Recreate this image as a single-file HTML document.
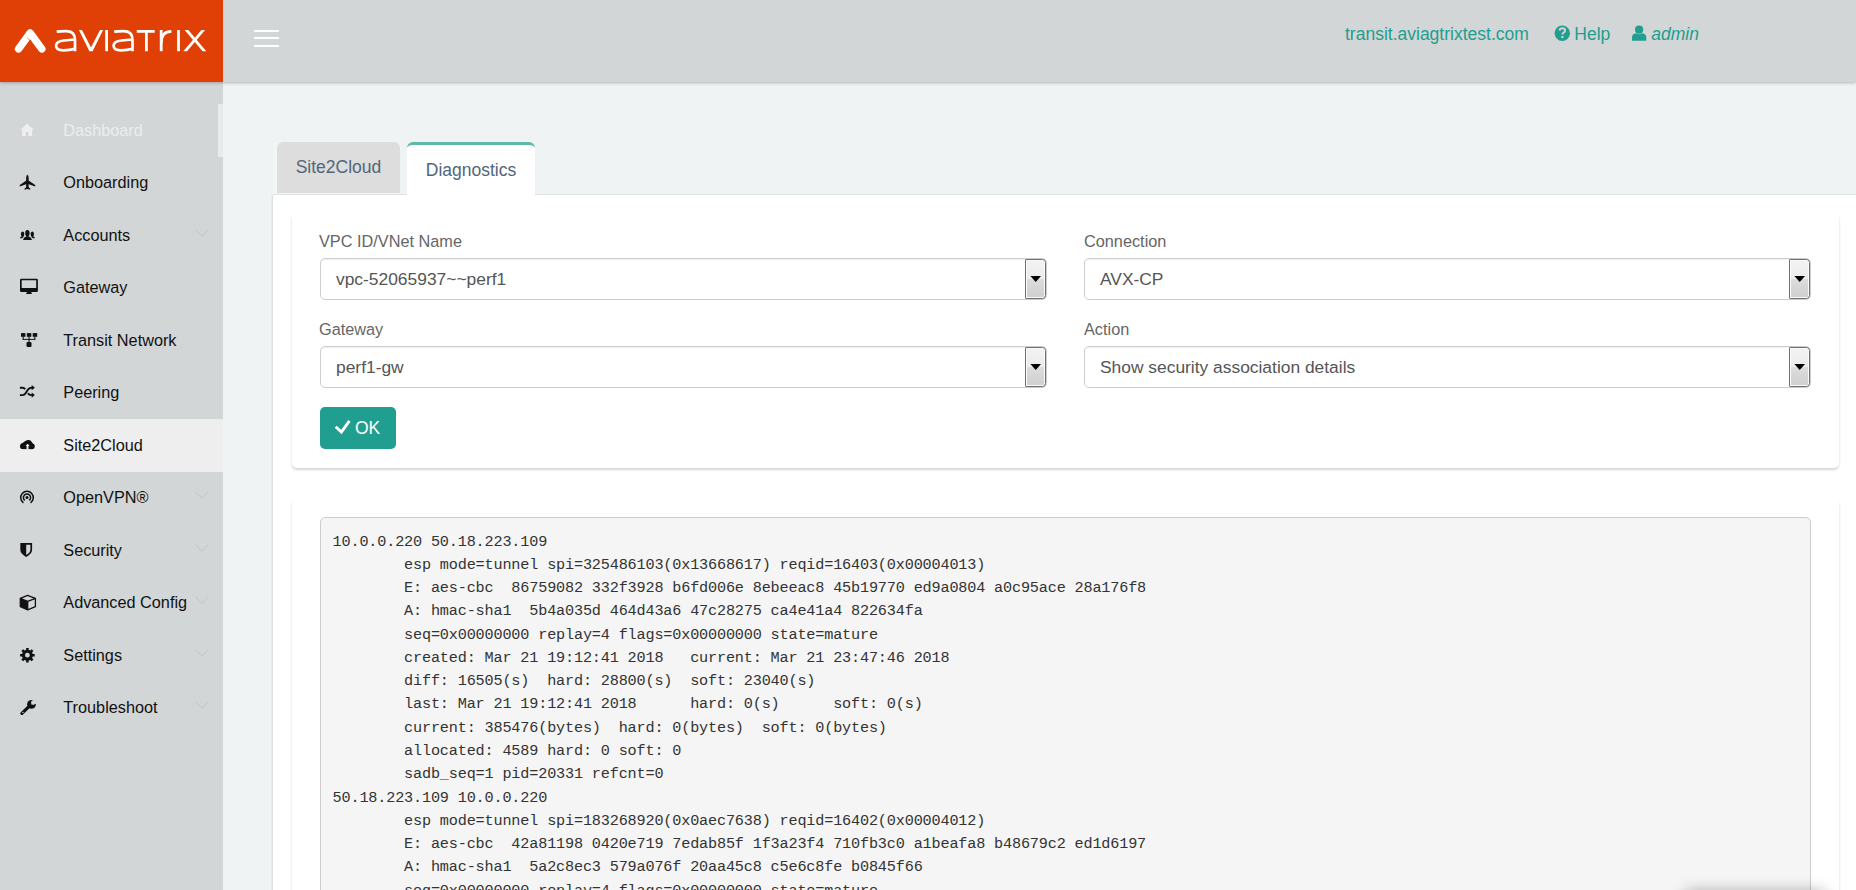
<!DOCTYPE html>
<html>
<head>
<meta charset="utf-8">
<title>Aviatrix Controller</title>
<style>
*{box-sizing:border-box;margin:0;padding:0}
html,body{width:1856px;height:890px;overflow:hidden}
body{font-family:"Liberation Sans",sans-serif;background:#eff3f4;position:relative;color:#333}
.abs{position:absolute}
#header{left:0;top:0;width:1856px;height:82px;background:#d3d6d7;box-shadow:0 1px 3px rgba(0,0,0,.25);z-index:5}
#logo{left:0;top:0;width:223px;height:82px;background:#e04006;z-index:6}
#sidebar{left:0;top:82px;width:223px;height:808px;background:#d3d6d7;z-index:2}
.nav{position:absolute;left:63.3px;height:20px;font-size:16.25px;color:#111;line-height:20px;white-space:nowrap}
.nav.dim{color:#eceeee}
.hdrtxt{top:0;height:68px;line-height:68px;font-size:17.5px;color:#209e8f;white-space:nowrap;z-index:7}
#panel{left:273px;top:194px;width:1583px;height:697px;background:#fff;border-top:1px solid #e0e3e4;box-shadow:-1px 1px 1.5px rgba(0,0,0,.10)}
.tab{position:absolute;font-size:17.5px;color:#51667a;text-align:center;white-space:nowrap}
#tab1{left:277px;top:142px;width:123px;height:51px;background:#ddd;border-radius:6px 6px 0 0;line-height:50px}
#tab2{left:407px;top:142px;width:128px;height:53px;background:#fff;border-radius:6px 6px 0 0;border-top:3px solid #5bb8ab;line-height:50px;z-index:3}
.card{position:absolute;left:292px;width:1547px;background:#fff;box-shadow:0 2px 2.5px rgba(0,0,0,.17);border-radius:5px}
label{position:absolute;font-size:16.3px;color:#666;white-space:nowrap;line-height:20px}
.sel{position:absolute;width:727px;height:42px;border:1px solid #ccc;border-radius:5px;background:#fff;font-size:17.4px;color:#555;line-height:40px;padding-left:15px;white-space:nowrap;box-shadow:inset 0 1px 1px rgba(0,0,0,.06)}
.sel i{position:absolute;right:0;top:0;width:21.4px;height:40px;border:1px solid #707070;border-radius:1px 3.5px 3.5px 1px;background:linear-gradient(#f3f3f3 0,#ebebeb 49%,#dddddd 50%,#cfcfcf 100%);box-shadow:inset 0 0 0 1px #fbfbfb}
.sel i:after{content:"";position:absolute;left:4.8px;top:16px;width:10.6px;height:5.9px;background:#000;clip-path:polygon(0 0,100% 0,50% 100%)}
#ok{left:320px;top:407px;width:76px;height:42px;background:#209e90;border-radius:5px;color:#fff;font-size:17.5px;line-height:43px;white-space:nowrap}
pre{position:absolute;left:320px;top:517px;width:1491px;height:400px;background:#f5f5f5;border:1px solid #ccc;border-radius:5px;font-family:"Liberation Mono",monospace;font-size:15.2px;letter-spacing:-0.175px;line-height:23.28px;color:#333;padding:12.5px 0 0 11.6px;tab-size:8;-moz-tab-size:8;overflow:hidden}
</style>
</head>
<body>
<div id="header" class="abs"></div>
<div id="logo" class="abs">
<svg width="223" height="82" viewBox="0 0 223 82">
<path d="M18.6 48.9 L30.15 33 L41.8 48.9" fill="none" stroke="#fff" stroke-width="7.5" stroke-linecap="round" stroke-linejoin="round"/>
<path d="M30.3 40.9 L27.4 38" stroke="#e04006" stroke-width="0.7" fill="none"/>
<path d="M56.7 31.6 Q60.0 31.1 66.0 31.1 Q75.0 31.1 75.0 39.6 L75.0 51.2 M75.0 39.5 L64.0 40.5 Q56.1 41.3 56.1 45.7 Q56.1 50.3 63.5 50.3 Q70.0 50.3 75.0 48.8" fill="none" stroke="#fff" stroke-width="2.7"/>
<path d="M78.9 30h3.1l9 17.6 9-17.6h3.1l-10.5 21.2h-3.2z" fill="#fff"/>
<rect x="105.2" y="30" width="2.8" height="21.2" fill="#fff"/>
<path d="M114.2 31.6 Q117.5 31.1 123.5 31.1 Q132.5 31.1 132.5 39.6 L132.5 51.2 M132.5 39.5 L121.5 40.5 Q113.6 41.3 113.6 45.7 Q113.6 50.3 121.0 50.3 Q127.5 50.3 132.5 48.8" fill="none" stroke="#fff" stroke-width="2.7"/>
<path d="M136.8 30h17.9v2.7h-6.9v18.5h-2.8V32.7h-8.2z" fill="#fff"/>
<rect x="159.8" y="30" width="2.8" height="21.2" fill="#fff"/>
<path d="M161.3 43 Q161.3 31.4 171.4 31.4" fill="none" stroke="#fff" stroke-width="2.7"/>
<rect x="177.1" y="30" width="2.8" height="21.2" fill="#fff"/>
<path d="M183.3 51.2h3.7L205.1 30h-3.7z" fill="#fff"/><path d="M184.6 30h3.7l18 21.2h-3.7z" fill="#fff"/>
</svg>
</div>
<svg class="abs" style="left:254px;top:29px;z-index:7" width="26" height="20" viewBox="0 0 26 20"><path d="M0 2h25M0 9h25M0 17h25" stroke="#fff" stroke-width="2"/></svg>
<svg class="abs" style="left:1550px;top:20px;z-index:7" width="104" height="28" viewBox="1550 20 104 28">
<circle cx="1562.3" cy="33.3" r="7.7" fill="#209e8f"/>
<path d="M1559.6 30.6 Q1559.8 28.3 1562.4 28.3 Q1565.1 28.3 1565.1 30.5 Q1565.1 31.8 1563.6 32.6 Q1562.4 33.3 1562.4 34.6" fill="none" stroke="#d3d6d7" stroke-width="1.9"/>
<rect x="1561.4" y="36" width="2" height="2.1" fill="#d3d6d7"/>
<circle cx="1639.1" cy="29.7" r="4.1" fill="#209e8f"/>
<path d="M1632 40.8 V37.5 Q1632 33.6 1636.2 33.3 Q1639.1 35 1642 33.3 Q1646.3 33.6 1646.3 37.5 V40.8Z" fill="#209e8f"/>
</svg>
<div class="hdrtxt abs" style="left:1345px">transit.aviagtrixtest.com</div>
<div class="hdrtxt abs" style="left:1574.3px">Help</div>
<div class="hdrtxt abs" style="left:1651.3px;font-style:italic">admin</div>

<div id="sidebar" class="abs">
<div class="abs" style="left:0;top:337px;width:223px;height:53px;background:#eee"></div>
<div class="nav dim" style="top:38px">Dashboard</div>
<div class="nav" style="top:90px">Onboarding</div>
<div class="nav" style="top:143px">Accounts</div>
<div class="nav" style="top:195px">Gateway</div>
<div class="nav" style="top:248px">Transit Network</div>
<div class="nav" style="top:300px">Peering</div>
<div class="nav" style="top:353px">Site2Cloud</div>
<div class="nav" style="top:405px">OpenVPN®</div>
<div class="nav" style="top:458px">Security</div>
<div class="nav" style="top:510px">Advanced Config</div>
<div class="nav" style="top:563px">Settings</div>
<div class="nav" style="top:615px">Troubleshoot</div>
</div>
<div class="abs" style="left:218px;top:104px;width:5px;height:53px;background:#eaecec;z-index:3"></div>

<svg class="abs" style="left:0;top:0;z-index:4" width="223" height="890" viewBox="0 0 223 890">
<!-- home -->
<path d="M27.1 123.8 L34 130 H32.1 V136 H28.4 V132 H25.8 V136 H22.1 V130 H20.2 Z" fill="#efefef"/>
<!-- plane -->
<g fill="#111">
<path d="M27.4 174.5 Q28.65 175.5 28.65 178 L28.65 187.6 L27.4 188.8 L26.15 187.6 L26.15 178 Q26.15 175.5 27.4 174.5Z"/>
<path d="M27.4 179.8 L35.2 185.1 L35.2 186.5 L27.4 183.8 L19.8 186.5 L19.8 185.1 Z"/>
<path d="M27.4 186.6 L30.2 188.6 L30.2 189.8 L27.4 189.0 L24.6 189.8 L24.6 188.6Z"/>
</g>
<!-- group -->
<g fill="#111">
<ellipse cx="27.4" cy="233.2" rx="2.2" ry="3.1"/><rect x="26.3" y="235.3" width="2.2" height="2.2"/>
<path d="M23 239.9 Q23.4 237.3 26.2 236.6 L27.4 237.3 L28.6 236.6 Q31.6 237.3 32 239.9Z"/>
<ellipse cx="22.6" cy="234.1" rx="1.7" ry="2.5"/><rect x="21.8" y="235.6" width="1.6" height="1.4"/>
<ellipse cx="32.3" cy="234.1" rx="1.7" ry="2.5"/><rect x="31.5" y="235.6" width="1.6" height="1.4"/>
<path d="M19.9 238.2 Q20.2 236.6 22 236.2 L23.6 237 Q22.5 237.5 22.3 238.2Z"/>
<path d="M35 238.2 Q34.7 236.6 32.9 236.2 L31.3 237 Q32.4 237.5 32.6 238.2Z"/>
</g>
<!-- monitor -->
<path d="M21.2 278.8 H36.7 Q37.9 278.8 37.9 280 V290.7 Q37.9 291.9 36.7 291.9 H21.2 Q20 291.9 20 290.7 V280 Q20 278.8 21.2 278.8Z M21.7 280.2 V288 H36.2 V280.2Z" fill="#111" fill-rule="evenodd"/>
<path d="M25.8 293.9 L27.4 291.8 L30.9 291.8 L32.1 293.9Z" fill="#111"/>
<!-- sitemap -->
<g fill="#111">
<rect x="21" y="333.1" width="4.4" height="3.7"/><rect x="26.8" y="333.1" width="4.5" height="3.7"/><rect x="32.7" y="333.1" width="4.5" height="3.7"/>
<rect x="22.7" y="336.5" width="1" height="3.3"/><rect x="34.3" y="336.5" width="1" height="3.3"/><rect x="28.5" y="336.5" width="1.1" height="6"/>
<rect x="22.7" y="338.9" width="12.6" height="0.95"/>
<rect x="26.5" y="342" width="5" height="4.9" rx="1"/>
</g>
<!-- shuffle -->
<g fill="none" stroke="#111" stroke-width="1.9">
<path d="M19.9 395.1 H22.3 Q24.5 395.1 25.8 393 L27.8 389.8 Q29.2 387.7 31.2 387.7 H32.2"/>
<path d="M19.9 387.7 H22.3 Q24.2 387.7 25.2 389.3"/>
<path d="M27.9 393.2 Q29.2 395.1 31.2 395.1 H32.2"/>
</g>
<path d="M31.7 385.1 L34.9 387.7 L31.7 390.3Z M31.7 392.5 L34.9 395.1 L31.7 397.7Z" fill="#111"/>
<!-- cloud upload -->
<g fill="#111">
<circle cx="22.9" cy="446.2" r="2.9"/><circle cx="28.3" cy="443.4" r="3.4"/><circle cx="31.9" cy="446.3" r="2.85"/><rect x="22.9" y="444.5" width="9" height="4.6"/><path d="M21.2 443.9 L25.3 441 L31.4 441.7 L33.7 444.4 L33 449 L22 449Z"/>
</g>
<path d="M27.6 443.7 L29.7 446 H28.5 V449.3 H26.6 V446 H25.5Z" fill="#eee"/>
<!-- broadcast -->
<g fill="none" stroke="#111" stroke-width="1.5">
<path d="M23.44 502.8 A6.3 6.3 0 1 1 30.56 502.8"/>
<path d="M24.8 500.45 A3.6 3.6 0 1 1 29.2 500.45"/>
</g>
<circle cx="27" cy="497.6" r="1.5" fill="#111"/>
<!-- shield -->
<path d="M20.3 543 H32.1 V549.5 Q32.1 554 26.2 556.9 Q20.3 554 20.3 549.5Z M26.2 544.7 V555 Q30.4 552.7 30.4 549.5 V544.7Z" fill="#111" fill-rule="evenodd"/>
<!-- cube -->
<path d="M20.3 598.3 L27.7 601.4 L27.7 609.8 L20.3 606.6Z" fill="#111"/>
<path d="M27.6 595.4 L20.3 598.3 L27.7 601.4 L35.4 598.3Z M35.4 598.3 V606.6 L27.7 609.8 V601.4 M20.3 598.3 V606.6 L27.7 609.8" fill="none" stroke="#111" stroke-width="1.3" stroke-linejoin="round"/>
<!-- gear -->
<path d="M26.09 649.86 L26.15 647.91 L28.65 647.91 L28.71 649.86 L30.25 650.50 L31.67 649.16 L33.44 650.93 L32.10 652.35 L32.74 653.89 L34.69 653.95 L34.69 656.45 L32.74 656.51 L32.10 658.05 L33.44 659.47 L31.67 661.24 L30.25 659.90 L28.71 660.54 L28.65 662.49 L26.15 662.49 L26.09 660.54 L24.55 659.90 L23.13 661.24 L21.36 659.47 L22.70 658.05 L22.06 656.51 L20.11 656.45 L20.11 653.95 L22.06 653.89 L22.70 652.35 L21.36 650.93 L23.13 649.16 L24.55 650.50Z M25.00 655.20 a2.4 2.4 0 1 0 4.8 0 a2.4 2.4 0 1 0 -4.8 0Z" fill="#111" fill-rule="evenodd"/>
<!-- wrench -->
<path d="M21.9 713.4 L29.6 705.9" stroke="#111" stroke-width="3.2" stroke-linecap="round" fill="none"/>
<circle cx="31.5" cy="704.3" r="4.4" fill="#111"/>
<path d="M31.2 704.6 L34.2 698.6 L38.5 703.5 Z" fill="#d3d6d7"/>
<circle cx="33.3" cy="702.5" r="2.3" fill="#d3d6d7"/>
<circle cx="22.9" cy="712.5" r="0.7" fill="#d3d6d7"/>
<!-- chevrons -->
<g fill="none" stroke="#cacccc" stroke-width="1.4">
<path d="M195.6 229.8 L201.9 236.2 L208.2 229.8"/>
<path d="M195.6 491.8 L201.9 498.2 L208.2 491.8"/>
<path d="M195.6 544.8 L201.9 551.2 L208.2 544.8"/>
<path d="M195.6 596.8 L201.9 603.2 L208.2 596.8"/>
<path d="M195.6 649.8 L201.9 656.2 L208.2 649.8"/>
<path d="M195.6 701.8 L201.9 708.2 L208.2 701.8"/>

</g>
</svg>
<div class="abs" style="left:273px;top:142px;width:4px;height:52px;background:#f3f6f7;border-radius:4px 0 0 0"></div>
<div class="abs" style="left:273px;top:193px;width:1583px;height:1px;background:#f1f4f5"></div>
<div id="tab1" class="tab">Site2Cloud</div>
<div id="tab2" class="tab">Diagnostics</div>
<div id="panel" class="abs"></div>

<div class="card" style="top:213px;height:255px"></div>
<label style="left:319px;top:231px">VPC ID/VNet Name</label>
<div class="sel" style="left:320px;top:258px">vpc-52065937~~perf1<i></i></div>
<label style="left:1084px;top:231px">Connection</label>
<div class="sel" style="left:1084px;top:258px">AVX-CP<i></i></div>
<label style="left:319px;top:319px">Gateway</label>
<div class="sel" style="left:320px;top:346px">perf1-gw<i></i></div>
<label style="left:1084px;top:319px">Action</label>
<div class="sel" style="left:1084px;top:346px">Show security association details<i></i></div>
<div id="ok" class="abs"><svg style="position:absolute;left:0;top:0" width="76" height="42" viewBox="0 0 76 42"><path d="M15.7 19.7 L21.4 25 L29.4 13.8" fill="none" stroke="#fff" stroke-width="2.9"/></svg><span style="position:absolute;left:35px">OK</span></div>

<div class="card" style="top:499px;height:420px"></div>
<pre>10.0.0.220 50.18.223.109
        esp mode=tunnel spi=325486103(0x13668617) reqid=16403(0x00004013)
        E: aes-cbc  86759082 332f3928 b6fd006e 8ebeeac8 45b19770 ed9a0804 a0c95ace 28a176f8
        A: hmac-sha1  5b4a035d 464d43a6 47c28275 ca4e41a4 822634fa
        seq=0x00000000 replay=4 flags=0x00000000 state=mature
        created: Mar 21 19:12:41 2018   current: Mar 21 23:47:46 2018
        diff: 16505(s)  hard: 28800(s)  soft: 23040(s)
        last: Mar 21 19:12:41 2018      hard: 0(s)      soft: 0(s)
        current: 385476(bytes)  hard: 0(bytes)  soft: 0(bytes)
        allocated: 4589 hard: 0 soft: 0
        sadb_seq=1 pid=20331 refcnt=0
50.18.223.109 10.0.0.220
        esp mode=tunnel spi=183268920(0x0aec7638) reqid=16402(0x00004012)
        E: aes-cbc  42a81198 0420e719 7edab85f 1f3a23f4 710fb3c0 a1beafa8 b48679c2 ed1d6197
        A: hmac-sha1  5a2c8ec3 579a076f 20aa45c8 c5e6c8fe b0845f66
        seq=0x00000000 replay=4 flags=0x00000000 state=mature
        created: Mar 21 19:12:41 2018   current: Mar 21 23:47:46 2018
</pre>
<div class="abs" style="left:1686px;top:892px;width:138px;height:20px;box-shadow:0 0 16px rgba(0,0,0,.36);z-index:9"></div>
</body>
</html>
